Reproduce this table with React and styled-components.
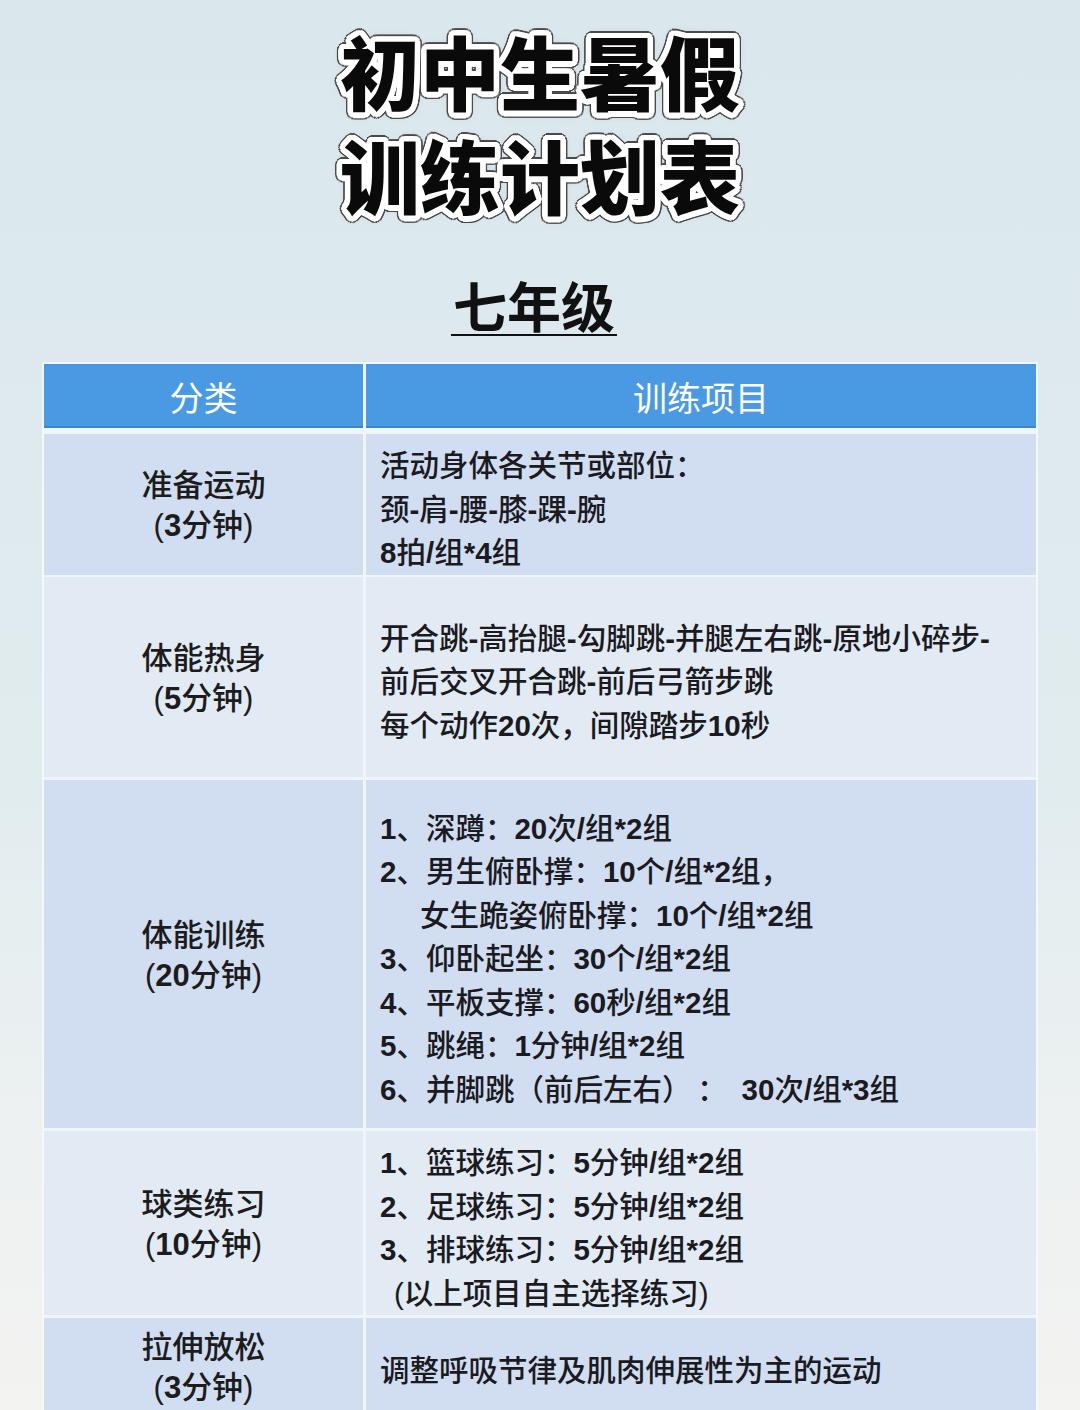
import React from "react";
import styled, { createGlobalStyle } from "styled-components";

const ring = (r, color, steps = 24) =>
  Array.from({ length: steps }, (_, i) => {
    const a = (i / steps) * Math.PI * 2;
    return `${(Math.cos(a) * r).toFixed(1)}px ${(Math.sin(a) * r).toFixed(1)}px 0 ${color}`;
  }).join(", ");

const titleShadow = [ring(3, "#fff"), ring(5.5, "#fff"), ring(7, "#4a4a4a"), "0 0 12px rgba(0,0,0,0.25)"].join(", ");

const GlobalStyle = createGlobalStyle`
  html, body {
    margin: 0;
    padding: 0;
  }
  body {
    font-family: "Liberation Sans", "Noto Sans CJK SC", sans-serif;
    background: linear-gradient(180deg, #dae7ed 0%, #e1ecef 55%, #edf1f1 80%, #f3f3f1 100%);
  }
`;

const Page = styled.div`
  width: 1080px;
  height: 1410px;
  overflow: hidden;
  display: flex;
  flex-direction: column;
  align-items: center;
`;

const Title = styled.h1`
  margin: 28px 0 0 0;
  display: flex;
  flex-direction: column;
  align-items: center;
  gap: 22px;
  font-family: "Noto Sans CJK SC", sans-serif;
  font-weight: 900;
  font-size: 80px;
  line-height: 82px;
  color: #0a0a0a;
  text-shadow: ${titleShadow};
`;

const TitleLine = styled.span`
  display: block;
`;

const Grade = styled.h2`
  margin: 62px 12px 0 0;
  font-family: "Noto Sans CJK SC", sans-serif;
  font-weight: 700;
  font-size: 54px;
  line-height: 58px;
  color: #111;
  padding: 0 2px;
  border-bottom: 2px solid #111;
`;

const Table = styled.div`
  margin-top: 26px;
  width: 996px;
  box-sizing: border-box;
  border: 2px solid #f4f8fb;
  border-bottom: none;
  background: #f0f5f9;
  display: flex;
  flex-direction: column;
  gap: 3px;
`;

const Row = styled.div`
  display: grid;
  grid-template-columns: 319px 1fr;
  column-gap: 3px;
  height: ${({ h }) => h}px;
  margin-bottom: ${({ gapAfter }) => gapAfter || 0}px;
`;

const HeadCell = styled.div`
  background: #4a9ae3;
  color: #fff;
  font-family: "Noto Sans CJK SC", sans-serif;
  font-size: 34px;
  display: flex;
  align-items: center;
  justify-content: center;
  box-shadow: inset 0 -2px 0 #3f86c9;
`;

const NameCell = styled.div`
  background: ${({ dark }) => (dark ? "#d1ddf1" : "#e2eaf4")};
  display: flex;
  flex-direction: column;
  align-items: center;
  justify-content: center;
  font-size: 31px;
  font-weight: 500;
  line-height: 40px;
  color: #1c1c1c;
  padding-top: 4px;
`;

const ItemCell = styled.div`
  background: ${({ dark }) => (dark ? "#d1ddf1" : "#e2eaf4")};
  display: flex;
  flex-direction: column;
  justify-content: center;
  padding: 10px 0 0 14px;
  font-size: 29.5px;
  font-weight: 500;
  line-height: 43.5px;
  color: #1a1a1f;
`;

const Line = styled.div`
  padding-left: ${({ indent }) => indent || 0}px;
  white-space: nowrap;
`;

const Num = styled.b`
  font-weight: 700;
`;

const rich = (text) =>
  text.split(/([0-9*\/\-]+)/).map((part, i) =>
    /^[0-9*\/\-]+$/.test(part) ? <Num key={i}>{part}</Num> : <span key={i}>{part}</span>
  );

const rows = [
  {
    h: 140,
    dark: true,
    name: ["准备运动", "(3分钟)"],
    items: [["活动身体各关节或部位："], ["颈-肩-腰-膝-踝-腕"], ["8拍/组*4组"]],
  },
  {
    h: 200,
    dark: false,
    name: ["体能热身", "(5分钟)"],
    items: [
      ["开合跳-高抬腿-勾脚跳-并腿左右跳-原地小碎步-"],
      ["前后交叉开合跳-前后弓箭步跳"],
      ["每个动作20次，间隙踏步10秒"],
    ],
  },
  {
    h: 348,
    dark: true,
    name: ["体能训练", "(20分钟)"],
    items: [
      ["1、深蹲：20次/组*2组"],
      ["2、男生俯卧撑：10个/组*2组，"],
      ["女生跪姿俯卧撑：10个/组*2组", 40],
      ["3、仰卧起坐：30个/组*2组"],
      ["4、平板支撑：60秒/组*2组"],
      ["5、跳绳：1分钟/组*2组"],
      ["6、并脚跳（前后左右）\u2009：\u200230次/组*3组"],
    ],
  },
  {
    h: 184,
    dark: false,
    name: ["球类练习", "(10分钟)"],
    items: [
      ["1、篮球练习：5分钟/组*2组"],
      ["2、足球练习：5分钟/组*2组"],
      ["3、排球练习：5分钟/组*2组"],
      ["(以上项目自主选择练习)", 14],
    ],
  },
  {
    h: 96,
    dark: true,
    name: ["拉伸放松", "(3分钟)"],
    items: [["调整呼吸节律及肌肉伸展性为主的运动"]],
  },
];

export default function App() {
  return (
    <Page>
      <GlobalStyle />
      <Title>
        <TitleLine>初中生暑假</TitleLine>
        <TitleLine>训练计划表</TitleLine>
      </Title>
      <Grade>七年级</Grade>
      <Table>
        <Row h={64} gapAfter={3}>
          <HeadCell>分类</HeadCell>
          <HeadCell>训练项目</HeadCell>
        </Row>
        {rows.map((row, i) => (
          <Row key={i} h={row.h}>
            <NameCell dark={row.dark}>
              {row.name.map((n, j) => (
                <div key={j}>{rich(n)}</div>
              ))}
            </NameCell>
            <ItemCell dark={row.dark}>
              {row.items.map(([text, indent], j) => (
                <Line key={j} indent={indent}>
                  {rich(text)}
                </Line>
              ))}
            </ItemCell>
          </Row>
        ))}
      </Table>
    </Page>
  );
}
